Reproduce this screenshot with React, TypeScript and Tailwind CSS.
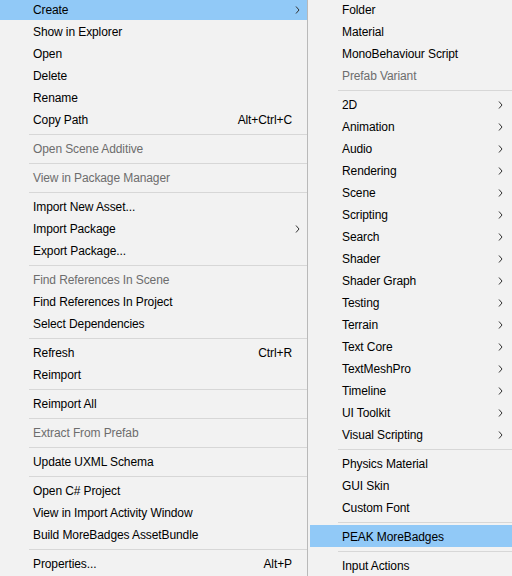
import React from 'react';

type Item =
  | { type: 'sep' }
  | { type: 'item'; label: string; shortcut?: string; sub?: boolean; disabled?: boolean; active?: boolean };

const it = (label: string, opts: Partial<Omit<Extract<Item, { type: 'item' }>, 'type' | 'label'>> = {}): Item => ({
  type: 'item',
  label,
  ...opts,
});
const sep: Item = { type: 'sep' };

const MAIN_MENU: Item[] = [
  it('Create', { sub: true, active: true }),
  it('Show in Explorer'),
  it('Open'),
  it('Delete'),
  it('Rename'),
  it('Copy Path', { shortcut: 'Alt+Ctrl+C' }),
  sep,
  it('Open Scene Additive', { disabled: true }),
  sep,
  it('View in Package Manager', { disabled: true }),
  sep,
  it('Import New Asset...'),
  it('Import Package', { sub: true }),
  it('Export Package...'),
  sep,
  it('Find References In Scene', { disabled: true }),
  it('Find References In Project'),
  it('Select Dependencies'),
  sep,
  it('Refresh', { shortcut: 'Ctrl+R' }),
  it('Reimport'),
  sep,
  it('Reimport All'),
  sep,
  it('Extract From Prefab', { disabled: true }),
  sep,
  it('Update UXML Schema'),
  sep,
  it('Open C# Project'),
  it('View in Import Activity Window'),
  it('Build MoreBadges AssetBundle'),
  sep,
  it('Properties...', { shortcut: 'Alt+P' }),
];

const CREATE_MENU: Item[] = [
  it('Folder'),
  it('Material'),
  it('MonoBehaviour Script'),
  it('Prefab Variant', { disabled: true }),
  sep,
  it('2D', { sub: true }),
  it('Animation', { sub: true }),
  it('Audio', { sub: true }),
  it('Rendering', { sub: true }),
  it('Scene', { sub: true }),
  it('Scripting', { sub: true }),
  it('Search', { sub: true }),
  it('Shader', { sub: true }),
  it('Shader Graph', { sub: true }),
  it('Testing', { sub: true }),
  it('Terrain', { sub: true }),
  it('Text Core', { sub: true }),
  it('TextMeshPro', { sub: true }),
  it('Timeline', { sub: true }),
  it('UI Toolkit', { sub: true }),
  it('Visual Scripting', { sub: true }),
  sep,
  it('Physics Material'),
  it('GUI Skin'),
  it('Custom Font'),
  sep,
  it('PEAK MoreBadges', { active: true }),
  sep,
  it('Input Actions'),
];

const Chevron = () => (
  <svg width="5" height="8" viewBox="0 0 5 8" className="shrink-0">
    <path d="M1 0.5 L4 4 L1 7.5" fill="none" stroke="#333333" strokeWidth="1" />
  </svg>
);

const MenuList = ({ items, textPad, sepPad, right }: { items: Item[]; textPad: string; sepPad: string; right: string }) => (
  <div className="flex flex-col -mt-[2px]">
    {items.map((item, i) => {
      if (item.type === 'sep') {
        return (
          <div key={i} className={`h-[7px] pt-[4px] ${sepPad}`}>
            <div className="h-px bg-[#d7d7d7]" />
          </div>
        );
      }
      return (
        <div
          key={i}
          className={`h-[22px] shrink-0 flex items-center pt-[2px] ${textPad} ${right} ${item.active ? 'bg-[#91c9f7]' : ''} ${
            item.disabled ? 'text-[#6d6d6d]' : 'text-black'
          }`}
        >
          <span className="flex-1 whitespace-nowrap">{item.label}</span>
          {item.shortcut && <span className="whitespace-nowrap mr-[8px]">{item.shortcut}</span>}
          {item.sub && <Chevron />}
        </div>
      );
    })}
  </div>
);

export default function App() {
  return (
    <div
      className="w-[512px] h-[576px] overflow-hidden flex bg-[#f2f2f2] text-[12px] leading-none tracking-[-0.1px]"
      style={{ fontFamily: '"Liberation Sans", Arial, sans-serif' }}
    >
      <div className="w-[307px] shrink-0 h-full">
        <MenuList items={MAIN_MENU} textPad="pl-[33px]" sepPad="pl-[29px]" right="pr-[7px]" />
      </div>
      <div className="w-px bg-[#b9b9b9] shrink-0" />
      <div className="flex-1 h-full pl-[2px]">
        <MenuList items={CREATE_MENU} textPad="pl-[32px]" sepPad="pl-[28px]" right="pr-[9px]" />
      </div>
    </div>
  );
}
